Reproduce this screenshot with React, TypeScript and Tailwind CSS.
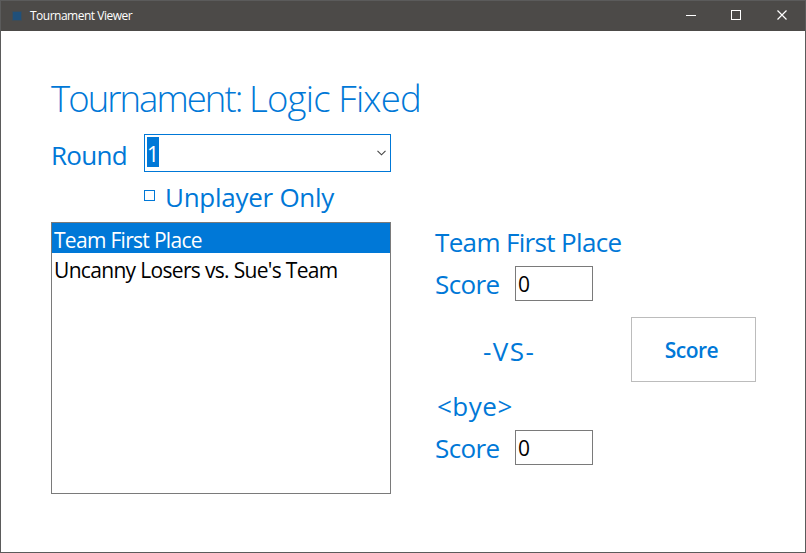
import { ReactNode } from "react";

function TitleBar() {
  return (
    <header className="flex h-[30px] items-center bg-[#4c4a48] text-white">
      <div className="ml-[11px] h-[10px] w-[10px] border border-[#3d4c57] bg-[#20507a]" />
      <span className="ml-2 text-[12px] leading-[30px] tracking-[-0.5px]">Tournament Viewer</span>
      <svg className="mr-[-1px] ml-auto" width="120" height="30" viewBox="0 0 120 30" fill="none" stroke="white" shapeRendering="crispEdges">
        <path d="M0 14.5h10" />
        <rect x="45.5" y="9.5" width="9" height="9" />
        <path d="M91.5 9.5l9 9M100.500 9.5l-9 9" shapeRendering="auto" strokeWidth="1.2" />
      </svg>
    </header>
  );
}

function ScoreRow({ className }: { className: string }) {
  return (
    <div className={"flex h-[35px] " + className}>
      <span className="w-20 text-[26px] leading-9 tracking-[-0.6px]">Score</span>
      <div className="w-[78px] border border-[#7a7a7a] pl-[2px] text-[21px] leading-[35px] text-black">0</div>
    </div>
  );
}

function Heading({ children }: { children: ReactNode }) {
  return <h1 className="mt-[42px] text-[36.5px] leading-[50px] font-light tracking-[-0.8px] whitespace-nowrap">{children}</h1>;
}

export default function App() {
  return (
    <div className="flex h-[553px] w-[806px] flex-col overflow-hidden border border-[#5b5b5b] bg-white font-['Open_Sans','Noto_Sans',sans-serif] text-[#0078d7]">
      <TitleBar />
      <main className="flex pl-[50px]">
        <section className="w-[340px]">
          <Heading>
            <span className="tracking-[-1.95px]">Tournament: </span>Logic Fixed
          </Heading>
          <div className="mt-[11px] flex h-[38px]">
            <span className="w-[93px] text-[26px] leading-[42px] tracking-[-0.7px]">Round</span>
            <div className="flex flex-1 items-center border border-[#0078d7] pl-[2px]">
              <span className="mb-[2px] h-[30px] w-3 bg-[#0078d7] text-[21px] leading-[34px] text-white">1</span>
              <svg className="mr-[4px] ml-auto" width="9" height="6" viewBox="0 0 9 6" fill="none" stroke="#444" strokeWidth="1.1">
                <path d="M.5.8l4 4 4-4" />
              </svg>
            </div>
          </div>
          <div className="mt-[7px] flex h-9 pl-[93px]">
            <div className="mt-[11px] h-[11px] w-[11px] border border-[#0078d7]" />
            <span className="ml-[10px] text-[26px] leading-9 tracking-[-0.27px] whitespace-nowrap">Unplayer Only</span>
          </div>
          <ul className="mt-[7px] h-[272px] border border-[#7a7a7a] text-[21px] text-black">
            <li className="h-[30px] bg-[#0078d7] pl-[2px] leading-[34px] tracking-[-0.7px] text-white">Team First Place</li>
            <li className="h-[30px] pl-[2px] leading-[34px] tracking-[-0.68px] whitespace-nowrap">Uncanny Losers vs. Sue's Team</li>
          </ul>
        </section>
        <section className="mt-[193px] ml-11 w-[321px]">
          <div className="text-[26px] leading-9 tracking-[-0.65px]">Team First Place</div>
          <ScoreRow className="mt-[6px]" />
          <div className="mt-4 flex h-[65px]">
            <span className="w-[196px] pt-4 pl-12 text-[26px] leading-9 tracking-[1.5px]">-VS-</span>
            <button className="w-[125px] border border-[#bcbcbc] pt-[3px] pr-1 text-[21px] font-semibold tracking-[-0.5px]">Score</button>
          </div>
          <div className="mt-[6px] pl-[2px] text-[26px] leading-9 tracking-[0.5px]">&lt;bye&gt;</div>
          <ScoreRow className="mt-[6px]" />
        </section>
      </main>
    </div>
  );
}
